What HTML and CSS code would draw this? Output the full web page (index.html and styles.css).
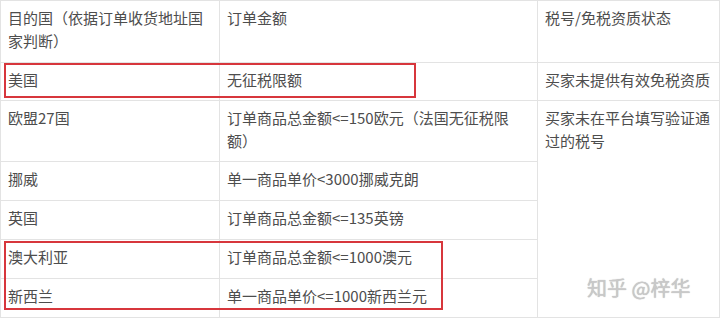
FILE: index.html
```html
<!DOCTYPE html>
<html lang="zh-CN">
<head>
<meta charset="utf-8">
<title>目的国征税限额</title>
<link rel="stylesheet" href="styles.css">
</head>
<body>
<div class="frame">
  <table class="tax-table">
    <colgroup>
      <col class="c1">
      <col class="c2">
      <col class="c3">
    </colgroup>
    <tr class="head">
      <td>目的国（依据订单收货地址国家判断）</td>
      <td>订单金额</td>
      <td>税号/免税资质状态</td>
    </tr>
    <tr class="tight">
      <td>美国</td>
      <td>无征税限额</td>
      <td>买家未提供有效免税资质</td>
    </tr>
    <tr class="tight">
      <td>欧盟27国</td>
      <td>订单商品总金额&lt;=150欧元（法国无征税限额）</td>
      <td rowspan="6" class="plain">买家未在平台填写验证通过的税号</td>
    </tr>
    <tr>
      <td>挪威</td>
      <td>单一商品单价&lt;3000挪威克朗</td>
    </tr>
    <tr>
      <td>英国</td>
      <td>订单商品总金额&lt;=135英镑</td>
    </tr>
    <tr>
      <td>澳大利亚</td>
      <td>订单商品总金额&lt;=1000澳元</td>
    </tr>
    <tr>
      <td>新西兰</td>
      <td>单一商品单价&lt;=1000新西兰元</td>
    </tr>
  </table>
  <div class="mark mark-us"></div>
  <div class="mark mark-anz"></div>
  <div class="watermark">知乎 @梓华</div>
</div>
</body>
</html>
```

FILE: styles.css
```css
html, body {
  margin: 0;
  padding: 0;
  background: #ffffff;
}

body {
  width: 720px;
  height: 318px;
  overflow: hidden;
  font-family: "Noto Sans CJK SC", "Noto Sans", sans-serif;
}

.frame {
  position: relative;
  width: 720px;
  height: 318px;
}

.tax-table {
  border-collapse: collapse;
  table-layout: fixed;
  width: 719px;
  font-size: 15px;
  line-height: 23px;
  color: #4d4d4d;
}

.c1 { width: 219px; }
.c2 { width: 318px; }
.c3 { width: 182px; }

.tax-table td {
  border: 1px solid #e3e3e3;
  padding: 5px 6px 10px 7px;
  vertical-align: top;
  text-align: left;
}

.tax-table .tight td {
  padding-bottom: 9px;
}

.tax-table .tight td.plain {
  padding-bottom: 10px;
}

.mark {
  position: absolute;
  border: 2px solid #d7363c;
  box-sizing: border-box;
}

.mark-us {
  left: 4px;
  top: 63px;
  width: 412px;
  height: 35px;
}

.mark-anz {
  left: 4px;
  top: 241px;
  width: 439px;
  height: 69px;
}

.watermark {
  position: absolute;
  left: 587px;
  top: 275px;
  font-size: 20px;
  line-height: 26px;
  color: #c9c9c9;
  text-shadow: 0 0 1px #b0b0b0;
  white-space: nowrap;
}
```
